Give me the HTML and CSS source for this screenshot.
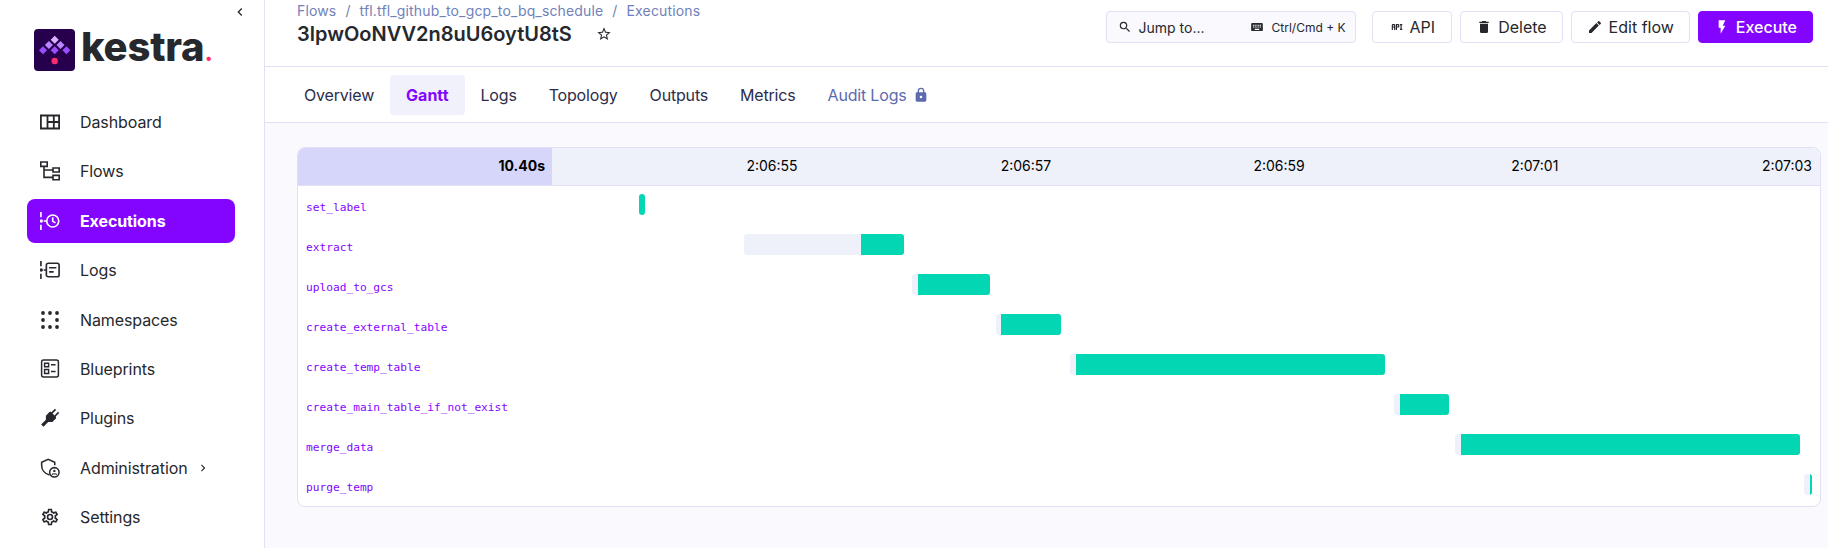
FILE: index.html
```html
<!DOCTYPE html>
<html lang="en">
<head>
    <meta charset="UTF-8">
    <meta name="viewport" content="width=device-width, initial-scale=1.0">
    <link rel="stylesheet" href="styles.css">
    <title>Kestra - Gantt</title>
</head>
<body>
    <aside class="sidebar">
        <div class="collapse-row">
            <svg class="collapse-icon" viewBox="0 0 24 24"><path d="M15.41,16.58L10.83,12L15.41,7.41L14,6L8,12L14,18L15.41,16.58Z"/></svg>
        </div>
        <div class="logo">
            <svg class="logo-mark" viewBox="0 0 41 42">
                <rect width="41" height="42" rx="4" fill="#26004d"/>
                <path fill="#d9b3ff" d="M20.7 6.7l4 4-4 4-4-4z"/>
                <path fill="#bb85ff" d="M14.9 11.9l4 4-4 4-4-4zM26.5 11.9l4 4-4 4-4-4z"/>
                <path fill="#9b4dff" d="M9 17.2l4 4-4 4-4-4zM20.7 17.2l4 4-4 4-4-4zM32.4 17.2l4 4-4 4-4-4z"/>
                <circle cx="20.7" cy="32" r="3.2" fill="#fd2c6f"/>
            </svg>
            <span class="logo-text">kestra<span class="logo-dot">.</span></span>
        </div>
        <nav class="nav">
            <a class="nav-item">
                <svg class="nav-icon" viewBox="0 0 20 20" fill="none" stroke="currentColor" stroke-width="1.8"><path d="M.9 3.5h18.2v13H.9zM7.5 3.5v13M13.8 3.5v13M7.5 10h11.6"/></svg>
                Dashboard
            </a>
            <a class="nav-item">
                <svg class="nav-icon" viewBox="0 0 20 20" fill="none" stroke="currentColor" stroke-width="1.6"><path d="M.8 1h6.4v4.4H.8zM13 7h6.2v4H13zM13 14.4h6.2v4.4H13zM4 5.4v11h9M4 9h9"/></svg>
                Flows
            </a>
            <a class="nav-item active">
                <svg class="nav-icon" viewBox="0 0 22 22" fill="none" stroke="currentColor" stroke-width="1.8"><path d="M1 1v6M1 15v6"/><circle cx="1.4" cy="11" r="1.8" fill="currentColor" stroke="none"/><circle cx="14" cy="11" r="6.6"/><path d="M14 7v4.4l3 1.6M4 11h3"/></svg>
                Executions
            </a>
            <a class="nav-item">
                <svg class="nav-icon" viewBox="0 0 22 22" fill="none" stroke="currentColor" stroke-width="1.8"><path d="M1 1v6M1 15v6"/><circle cx="1.4" cy="11" r="1.8" fill="currentColor" stroke="none"/><rect x="7" y="3.6" width="14" height="14.8" rx="2"/><path d="M4 11h3M10 8.5h8M10 13h5"/></svg>
                Logs
            </a>
            <a class="nav-item">
                <svg class="nav-icon" viewBox="0 0 20 20" fill="currentColor"><circle cx="3" cy="3" r="1.9"/><circle cx="10" cy="3" r="1.9"/><circle cx="17" cy="3" r="1.9"/><circle cx="3" cy="10" r="1.9"/><circle cx="17" cy="10" r="1.9"/><circle cx="3" cy="17" r="1.9"/><circle cx="10" cy="17" r="1.9"/><circle cx="17" cy="17" r="1.9"/></svg>
                Namespaces
            </a>
            <a class="nav-item">
                <svg class="nav-icon" viewBox="0 0 20 20" fill="none" stroke="currentColor" stroke-width="1.5"><rect x="1.6" y="1" width="16.8" height="17" rx="2"/><path d="M4.6 4.2h4v3.6h-4zM4.6 10.6h4v3.8h-4zM11 5.8h4.6M11 12.6h4.6"/></svg>
                Blueprints
            </a>
            <a class="nav-item">
                <svg class="nav-icon plug-icon" viewBox="0 0 24 24"><path transform="rotate(45 12 12)" d="M15.6,6V0H13.6V6H10.4V0H8.4V6C7.4,6 6.5,6.9 6.5,7.5V13.5L10,17V25H14V17L17.5,13.5V7.5C17.5,6.9 16.6,6 15.6,6Z"/></svg>
                Plugins
            </a>
            <a class="nav-item">
                <svg class="nav-icon" viewBox="0 0 22 22" fill="none" stroke="currentColor" stroke-width="1.7"><path d="M10.5 18.6C5 17.4 1.8 13 1.8 8V4.6L9 1.4l7.2 3.2V8"/><circle cx="15.8" cy="15.8" r="5.2" fill="#fff"/><circle cx="15.8" cy="14.2" r="1.3" fill="currentColor" stroke="none"/><path d="M13.2 18.4c.5-1.5 4.7-1.5 5.2 0" stroke-width="1.2"/></svg>
                Administration
                <svg class="nav-chevron" viewBox="0 0 24 24"><path d="M8.59,16.58L13.17,12L8.59,7.41L10,6L16,12L10,18L8.59,16.58Z"/></svg>
            </a>
            <a class="nav-item">
                <svg class="nav-icon" viewBox="0 0 24 24"><path d="M12,8A4,4 0 0,1 16,12A4,4 0 0,1 12,16A4,4 0 0,1 8,12A4,4 0 0,1 12,8M12,10A2,2 0 0,0 10,12A2,2 0 0,0 12,14A2,2 0 0,0 14,12A2,2 0 0,0 12,10M10,22C9.75,22 9.54,21.82 9.5,21.58L9.13,18.93C8.5,18.68 7.96,18.34 7.44,17.94L4.95,18.95C4.73,19.03 4.46,18.95 4.34,18.73L2.34,15.27C2.21,15.05 2.27,14.78 2.46,14.63L4.57,12.97L4.5,12L4.57,11L2.46,9.37C2.27,9.22 2.21,8.95 2.34,8.73L4.34,5.27C4.46,5.05 4.73,4.96 4.95,5.05L7.44,6.05C7.96,5.66 8.5,5.32 9.13,5.07L9.5,2.42C9.54,2.18 9.75,2 10,2H14C14.25,2 14.46,2.18 14.5,2.42L14.87,5.07C15.5,5.32 16.04,5.66 16.56,6.05L19.05,5.05C19.27,4.96 19.54,5.05 19.66,5.27L21.66,8.73C21.79,8.95 21.73,9.22 21.54,9.37L19.43,11L19.5,12L19.43,13L21.54,14.63C21.73,14.78 21.79,15.05 21.66,15.27L19.66,18.73C19.54,18.95 19.27,19.04 19.05,18.95L16.56,17.95C16.04,18.34 15.5,18.68 14.87,18.93L14.5,21.58C14.46,21.82 14.25,22 14,22H10M11.25,4L10.88,6.61C9.68,6.86 8.62,7.5 7.85,8.39L5.44,7.35L4.69,8.65L6.8,10.2C6.4,11.37 6.4,12.64 6.8,13.8L4.68,15.36L5.43,16.66L7.86,15.62C8.63,16.5 9.68,17.14 10.87,17.38L11.24,20H12.76L13.13,17.39C14.32,17.14 15.37,16.5 16.14,15.62L18.57,16.66L19.32,15.36L17.2,13.81C17.6,12.64 17.6,11.37 17.2,10.2L19.31,8.65L18.56,7.35L16.15,8.39C15.38,7.5 14.32,6.86 13.12,6.62L12.75,4H11.25Z"/></svg>
                Settings
            </a>
        </nav>
    </aside>

    <main class="main">
        <header class="top-bar">
            <div class="title-block">
                <div class="breadcrumb">Flows<span class="crumb-sep">/</span>tfl.tfl_github_to_gcp_to_bq_schedule<span class="crumb-sep">/</span>Executions</div>
                <h1 class="page-title">3lpwOoNVV2n8uU6oytU8tS
                    <svg class="star-icon" viewBox="0 0 24 24"><path d="M12,15.39L8.24,17.66L9.23,13.38L5.91,10.5L10.29,10.13L12,6.09L13.71,10.13L18.09,10.5L14.77,13.38L15.76,17.66M22,9.24L14.81,8.63L12,2L9.19,8.62L2,9.24L7.45,13.97L5.82,21L12,17.27L18.18,21L16.54,13.97L22,9.24Z"/></svg>
                </h1>
            </div>
            <div class="actions">
                <div class="search-box">
                    <svg class="search-icon" viewBox="0 0 24 24"><path d="M9.5,3A6.5,6.5 0 0,1 16,9.5C16,11.11 15.41,12.59 14.44,13.73L14.71,14H15.5L20.5,19L19,20.5L14,15.5V14.71L13.73,14.44C12.59,15.41 11.11,16 9.5,16A6.5,6.5 0 0,1 3,9.5A6.5,6.5 0 0,1 9.5,3M9.5,5C7,5 5,7 5,9.5C5,12 7,14 9.5,14C12,14 14,12 14,9.5C14,7 12,5 9.5,5Z"/></svg>
                    <span class="search-text">Jump to...</span>
                    <svg class="key-icon" viewBox="0 0 24 24"><path d="M19,10H17V8H19M19,13H17V11H19M16,10H14V8H16M16,13H14V11H16M16,17H8V15H16M7,10H5V8H7M7,13H5V11H7M8,11H10V13H8M8,8H10V10H8M11,11H13V13H11M11,8H13V10H11M20,5H4C2.89,5 2,5.89 2,7V17A2,2 0 0,0 4,19H20A2,2 0 0,0 22,17V7C22,5.89 21.1,5 20,5Z"/></svg>
                    <span class="search-hint">Ctrl/Cmd + K</span>
                </div>
                <button class="btn btn-api">
                    <svg class="btn-icon" viewBox="0 0 24 24"><path d="M7 7H5A2 2 0 0 0 3 9V17H5V13H7V17H9V9A2 2 0 0 0 7 7M7 11H5V9H7M14 7H10V17H12V13H14A2 2 0 0 0 16 11V9A2 2 0 0 0 14 7M14 11H12V9H14M20 9V15H21V17H17V15H18V9H17V7H21V9Z"/></svg>
                    API
                </button>
                <button class="btn">
                    <svg class="btn-icon" viewBox="0 0 24 24"><path d="M19,4H15.5L14.5,3H9.5L8.5,4H5V6H19M6,19A2,2 0 0,0 8,21H16A2,2 0 0,0 18,19V7H6V19Z"/></svg>
                    Delete
                </button>
                <button class="btn">
                    <svg class="btn-icon" viewBox="0 0 24 24"><path d="M20.71,7.04C21.1,6.65 21.1,6 20.71,5.63L18.37,3.29C18,2.9 17.35,2.9 16.96,3.29L15.12,5.12L18.87,8.87M3,17.25V21H6.75L17.81,9.93L14.06,6.18L3,17.25Z"/></svg>
                    Edit flow
                </button>
                <button class="btn btn-primary">
                    <svg class="btn-icon" viewBox="0 0 24 24"><path d="M7,2V13H10V22L17,10H13L17,2H7Z"/></svg>
                    Execute
                </button>
            </div>
        </header>

        <div class="tabs">
            <a class="tab">Overview</a>
            <a class="tab active">Gantt</a>
            <a class="tab">Logs</a>
            <a class="tab">Topology</a>
            <a class="tab">Outputs</a>
            <a class="tab">Metrics</a>
            <a class="tab locked">Audit Logs
                <svg class="lock-icon" viewBox="0 0 24 24"><path d="M12,17A2,2 0 0,0 14,15C14,13.89 13.1,13 12,13A2,2 0 0,0 10,15A2,2 0 0,0 12,17M18,8A2,2 0 0,1 20,10V20A2,2 0 0,1 18,22H6A2,2 0 0,1 4,20V10C4,8.89 4.9,8 6,8H7V6A5,5 0 0,1 12,1A5,5 0 0,1 17,6V8H18M12,3A3,3 0 0,0 9,6V8H15V6A3,3 0 0,0 12,3Z"/></svg>
            </a>
        </div>

        <section class="content">
            <div class="gantt">
                <div class="gantt-head">
                    <div class="gantt-duration">10.40s</div>
                    <div class="gantt-ticks">
                        <span class="tick">2:06:55</span>
                        <span class="tick">2:06:57</span>
                        <span class="tick">2:06:59</span>
                        <span class="tick">2:07:01</span>
                        <span class="tick">2:07:03</span>
                    </div>
                </div>
                <div class="gantt-row">
                    <div class="task-name">set_label</div>
                    <div class="track"><div class="bar" style="margin-left:6.86%;width:0.47%"><div class="bar-run" style="width:100%"></div></div></div>
                </div>
                <div class="gantt-row">
                    <div class="task-name">extract</div>
                    <div class="track"><div class="bar" style="margin-left:15.14%;width:12.62%"><div class="bar-run" style="width:26.9%"></div></div></div>
                </div>
                <div class="gantt-row">
                    <div class="task-name">upload_to_gcs</div>
                    <div class="track"><div class="bar" style="margin-left:28.39%;width:6.15%"><div class="bar-run" style="width:92.3%"></div></div></div>
                </div>
                <div class="gantt-row">
                    <div class="task-name">create_external_table</div>
                    <div class="track"><div class="bar" style="margin-left:35.02%;width:5.13%"><div class="bar-run" style="width:92.3%"></div></div></div>
                </div>
                <div class="gantt-row">
                    <div class="task-name">create_temp_table</div>
                    <div class="track"><div class="bar" style="margin-left:40.85%;width:24.84%"><div class="bar-run" style="width:98.1%"></div></div></div>
                </div>
                <div class="gantt-row">
                    <div class="task-name">create_main_table_if_not_exist</div>
                    <div class="track"><div class="bar" style="margin-left:66.4%;width:4.34%"><div class="bar-run" style="width:89.1%"></div></div></div>
                </div>
                <div class="gantt-row">
                    <div class="task-name">merge_data</div>
                    <div class="track"><div class="bar" style="margin-left:71.21%;width:27.21%"><div class="bar-run" style="width:98.3%"></div></div></div>
                </div>
                <div class="gantt-row">
                    <div class="task-name">purge_temp</div>
                    <div class="track"><div class="bar" style="margin-left:98.74%;width:0.63%"><div class="bar-run" style="width:25%"></div></div></div>
                </div>
            </div>
        </section>
    </main>
</body>
</html>
```

FILE: styles.css
```css
* {
    box-sizing: border-box;
}

body {
    font-family: Inter, 'Noto Sans', sans-serif;
    font-size: 16px;
    color: #26282d;
    background-color: #f9f9fe;
    margin: 0;
    display: flex;
    height: 548px;
    overflow: hidden;
}

svg:not([fill]) {
    fill: currentColor;
}

svg {
    flex-shrink: 0;
}

/* sidebar */
.sidebar {
    width: 265px;
    flex-shrink: 0;
    background-color: #fff;
    border-right: 1px solid #e1e0f5;
}

.collapse-row {
    display: flex;
    justify-content: flex-end;
    padding: 4px 16px 0 0;
    height: 29px;
}

.collapse-icon {
    width: 16px;
    height: 16px;
}

.logo {
    display: flex;
    align-items: center;
    gap: 6px;
    padding-left: 34px;
    height: 42px;
    margin-bottom: 29px;
}

.logo-mark {
    width: 41px;
    height: 42px;
}

.logo-text {
    font-size: 40px;
    font-weight: 800;
    letter-spacing: -0.2px;
    line-height: 42px;
    color: #26282d;
}

.logo-dot {
    font-size: 24px;
    color: #fd2c6f;
}

.nav {
    display: flex;
    flex-direction: column;
    gap: 5.4px;
    padding-left: 27px;
}

.nav-item {
    width: 208px;
    height: 44px;
    display: flex;
    align-items: center;
    padding-left: 13px;
    border-radius: 8px;
    letter-spacing: -0.1px;
    color: #26282d;
}

.nav-item.active {
    background-color: #8405ff;
    color: #fff;
    font-weight: 700;
}

.nav-icon {
    width: 20px;
    height: 20px;
    margin-right: 20px;
}

.nav-chevron {
    width: 14px;
    height: 14px;
    margin-left: 8px;
}

/* top bar */
.main {
    flex: 1;
    min-width: 0;
    display: flex;
    flex-direction: column;
}

.top-bar {
    height: 67px;
    background-color: #fff;
    border-bottom: 1px solid #e1e0f5;
    display: flex;
    justify-content: space-between;
    padding: 0 15px 0 32px;
}

.breadcrumb {
    font-size: 14px;
    line-height: 20px;
    letter-spacing: 0.15px;
    color: #7081b9;
    margin-top: 1px;
}

.crumb-sep {
    margin: 0 9px;
}

.page-title {
    margin: 0;
    font-size: 20px;
    font-weight: 600;
    line-height: 26px;
    display: flex;
    align-items: center;
}

.star-icon {
    width: 16px;
    height: 16px;
    margin-left: 24px;
}

.actions {
    display: flex;
    gap: 8px;
    padding-top: 11px;
}

.search-box {
    width: 250px;
    height: 32px;
    margin-right: 8px;
    display: flex;
    align-items: center;
    padding: 0 9px 0 11px;
    background-color: #f9f9fe;
    border: 1px solid #e1e0f5;
    border-radius: 4px;
    font-size: 14px;
    color: #26282d;
}

.search-icon {
    width: 14px;
    height: 14px;
    margin-right: 7px;
}

.search-text {
    flex: 1;
}

.key-icon {
    width: 14px;
    height: 14px;
    margin-right: 8px;
}

.search-hint {
    font-size: 12px;
}

.btn {
    height: 32px;
    display: flex;
    align-items: center;
    gap: 6px;
    padding: 0 15px;
    background-color: #fff;
    border: 1px solid #e1e0f5;
    border-radius: 4px;
    font-family: inherit;
    font-size: 16px;
    color: #26282d;
}

.btn-icon {
    width: 16px;
    height: 16px;
}

.btn-api {
    padding: 0 16px 0 17px;
}

.btn-api .btn-icon {
    width: 14px;
    height: 14px;
}

.btn-primary {
    background-color: #8405ff;
    border-color: #8405ff;
    color: #fff;
    font-weight: 500;
}

/* tabs */
.tabs {
    height: 56px;
    background-color: #fff;
    border-bottom: 1px solid #e1e0f5;
    display: flex;
    align-items: flex-start;
    padding: 8px 0 0 23px;
}

.tab {
    height: 40px;
    display: flex;
    align-items: center;
    padding: 0 16px;
    border-radius: 4px;
    letter-spacing: -0.18px;
    color: #2c2e4b;
}

.tab.active {
    background-color: #f1f1fb;
    color: #8405ff;
    font-weight: 700;
    letter-spacing: 0;
}

.tab.locked {
    color: #5c6bae;
}

.lock-icon {
    width: 16px;
    height: 16px;
    margin-left: 6px;
}

/* gantt */
.content {
    padding: 24px 7px 0 32px;
}

.gantt {
    background-color: #fff;
    border: 1px solid #e1e0f5;
    border-radius: 8px;
    overflow: hidden;
}

.gantt-head {
    display: flex;
    height: 38px;
    background-color: #eef1f9;
    border-bottom: 1px solid #e1e0f5;
    font-size: 14px;
    line-height: 36px;
    color: #000;
}

.gantt-duration {
    width: 254px;
    padding-right: 7px;
    text-align: right;
    font-weight: 700;
    background-color: #d6d6fb;
}

.gantt-ticks {
    flex: 1;
    display: flex;
}

.tick {
    flex: 1;
    text-align: right;
    padding-right: 8px;
}

.gantt-row {
    display: flex;
    height: 40px;
    padding-top: 8px;
}

.task-name {
    width: 254px;
    padding: 6px 0 0 8px;
    font-family: 'DejaVu Sans Mono', 'Liberation Mono', monospace;
    font-size: 11.2px;
    line-height: 16px;
    color: #8405ff;
}

.track {
    flex: 1;
}

.bar {
    height: 21px;
    display: flex;
    justify-content: flex-end;
    background-color: #eef1f9;
    border-radius: 3px;
    overflow: hidden;
}

.bar-run {
    background-color: #03d6b2;
}
```
